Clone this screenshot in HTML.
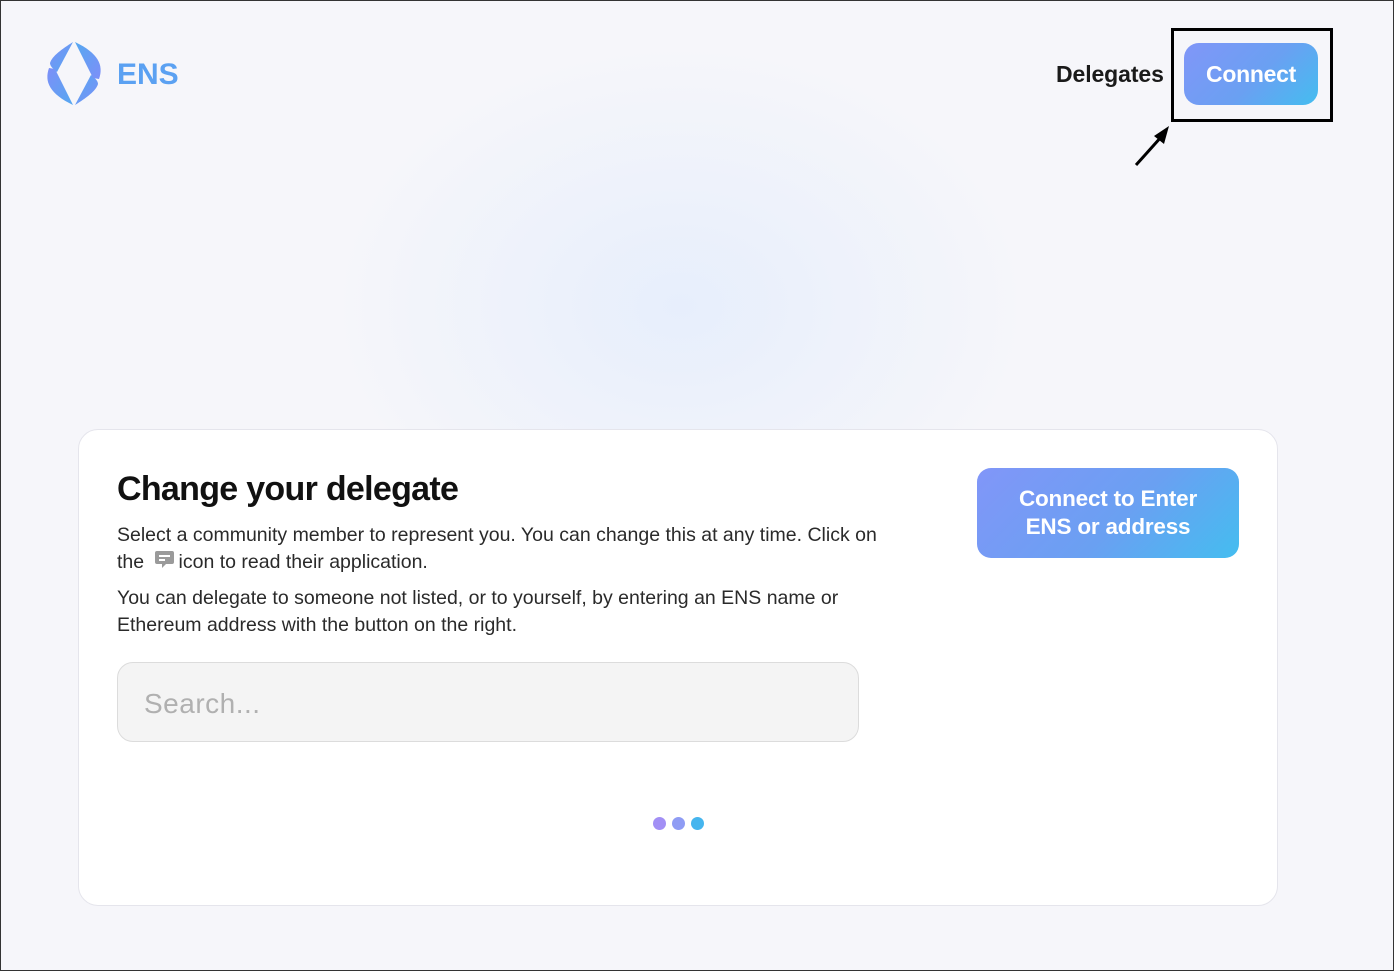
<!DOCTYPE html>
<html><head><meta charset="utf-8"><style>
*{margin:0;padding:0;box-sizing:border-box}
html,body{width:1394px;height:971px;overflow:hidden}
body{font-family:"Liberation Sans",sans-serif;background:#f6f6fa;position:relative}
.frame{position:absolute;left:0;top:0;width:1394px;height:971px;border:1px solid #333;pointer-events:none}
.glow{position:absolute;left:300px;top:20px;width:760px;height:520px;background:radial-gradient(ellipse at 50% 55%,rgba(228,237,252,0.85),rgba(246,246,250,0) 65%)}
.grad{background:linear-gradient(135deg,#8196f8 0%,#6aa0f2 55%,#44bdf0 100%)}
.ens{position:absolute;left:117px;top:58px;font-size:30px;font-weight:bold;color:#5ba1f2}
.deleg{position:absolute;left:1056px;top:61px;font-size:23px;font-weight:bold;color:#1a1a1a;letter-spacing:-0.1px}
.conn{position:absolute;left:1184px;top:43px;width:134px;height:62px;border-radius:15px;color:#fff;font-weight:bold;font-size:23px;text-align:center;line-height:62px;letter-spacing:-0.3px}
.box{position:absolute;left:1171px;top:28px;width:162px;height:94px;border:3px solid #000}
.card{position:absolute;left:78px;top:429px;width:1200px;height:477px;background:#fff;border:1px solid #e5e5ec;border-radius:20px}
h1{position:absolute;left:38px;top:40px;font-size:34px;font-weight:bold;color:#111;letter-spacing:-0.7px}
.p{position:absolute;left:38px;font-size:19.5px;color:#2a2a2a;line-height:27px;letter-spacing:0px;width:820px}
.search{position:absolute;left:38px;top:232px;width:742px;height:80px;border:1px solid #dcdcdc;background:#f4f4f4;border-radius:16px;font-size:28px;color:#b0b0b0;padding-left:26px;line-height:82px;letter-spacing:0.5px}
.btn2{position:absolute;left:898px;top:38px;width:262px;height:90px;border-radius:14px;color:#fff;font-weight:bold;font-size:22.5px;text-align:center;line-height:28px;padding-top:17px;letter-spacing:-0.2px}
.dot{position:absolute;top:387px;width:13px;height:13px;border-radius:50%}
</style></head><body>
<div class="glow"></div>
<svg style="position:absolute;left:40px;top:38px" width="70" height="72" viewBox="0 0 70 72">
<defs><linearGradient id="g" x1="0" y1="0" x2="1" y2="1"><stop offset="0" stop-color="#7d8ff8"/><stop offset="1" stop-color="#55a8f0"/></linearGradient></defs>
<g fill="url(#g)">
<path d="M33 4 L17 34 C13 31 10 28 10 25 C12 18 22 11 33 4Z"/>
<path d="M9 30 C4 44 10 56 33 67 L15 31 Z"/>
<g transform="rotate(180 34 35.5)">
<path d="M33 4 L17 34 C13 31 10 28 10 25 C12 18 22 11 33 4Z"/>
<path d="M9 30 C4 44 10 56 33 67 L15 31 Z"/>
</g></g>
</svg>
<div class="ens">ENS</div>
<div class="deleg">Delegates</div>
<div class="conn grad">Connect</div>
<div class="box"></div>
<svg style="position:absolute;left:1130px;top:120px" width="45" height="50"><line x1="6" y1="45" x2="32" y2="16" stroke="#000" stroke-width="3"/><polygon points="39,6 24,16 34,24" fill="#000"/></svg>
<div class="card">
<h1>Change your delegate</h1>
<div class="p" style="top:92px">Select a community member to represent you. You can change this at any time. Click on<br>the <svg width="21" height="20" viewBox="0 0 21 20" style="vertical-align:-2px;margin:0 4px"><path d="M3 1h15a2 2 0 0 1 2 2v9a2 2 0 0 1-2 2h-6l-4 4v-4H3a2 2 0 0 1-2-2V3a2 2 0 0 1 2-2z" fill="#9a9a9a"/><rect x="5" y="5" width="11" height="2" fill="#fff"/><rect x="5" y="9" width="6" height="2" fill="#fff"/></svg>icon to read their application.</div>
<div class="p" style="top:155px">You can delegate to someone not listed, or to yourself, by entering an ENS name or<br>Ethereum address with the button on the right.</div>
<div class="search">Search...</div>
<div class="btn2 grad">Connect to Enter<br>ENS or address</div>
<div class="dot" style="left:574px;background:#a28ff5"></div>
<div class="dot" style="left:593px;background:#8f9cf4"></div>
<div class="dot" style="left:612px;background:#45b5ee"></div>
</div>
<div class="frame"></div>
</body></html>
